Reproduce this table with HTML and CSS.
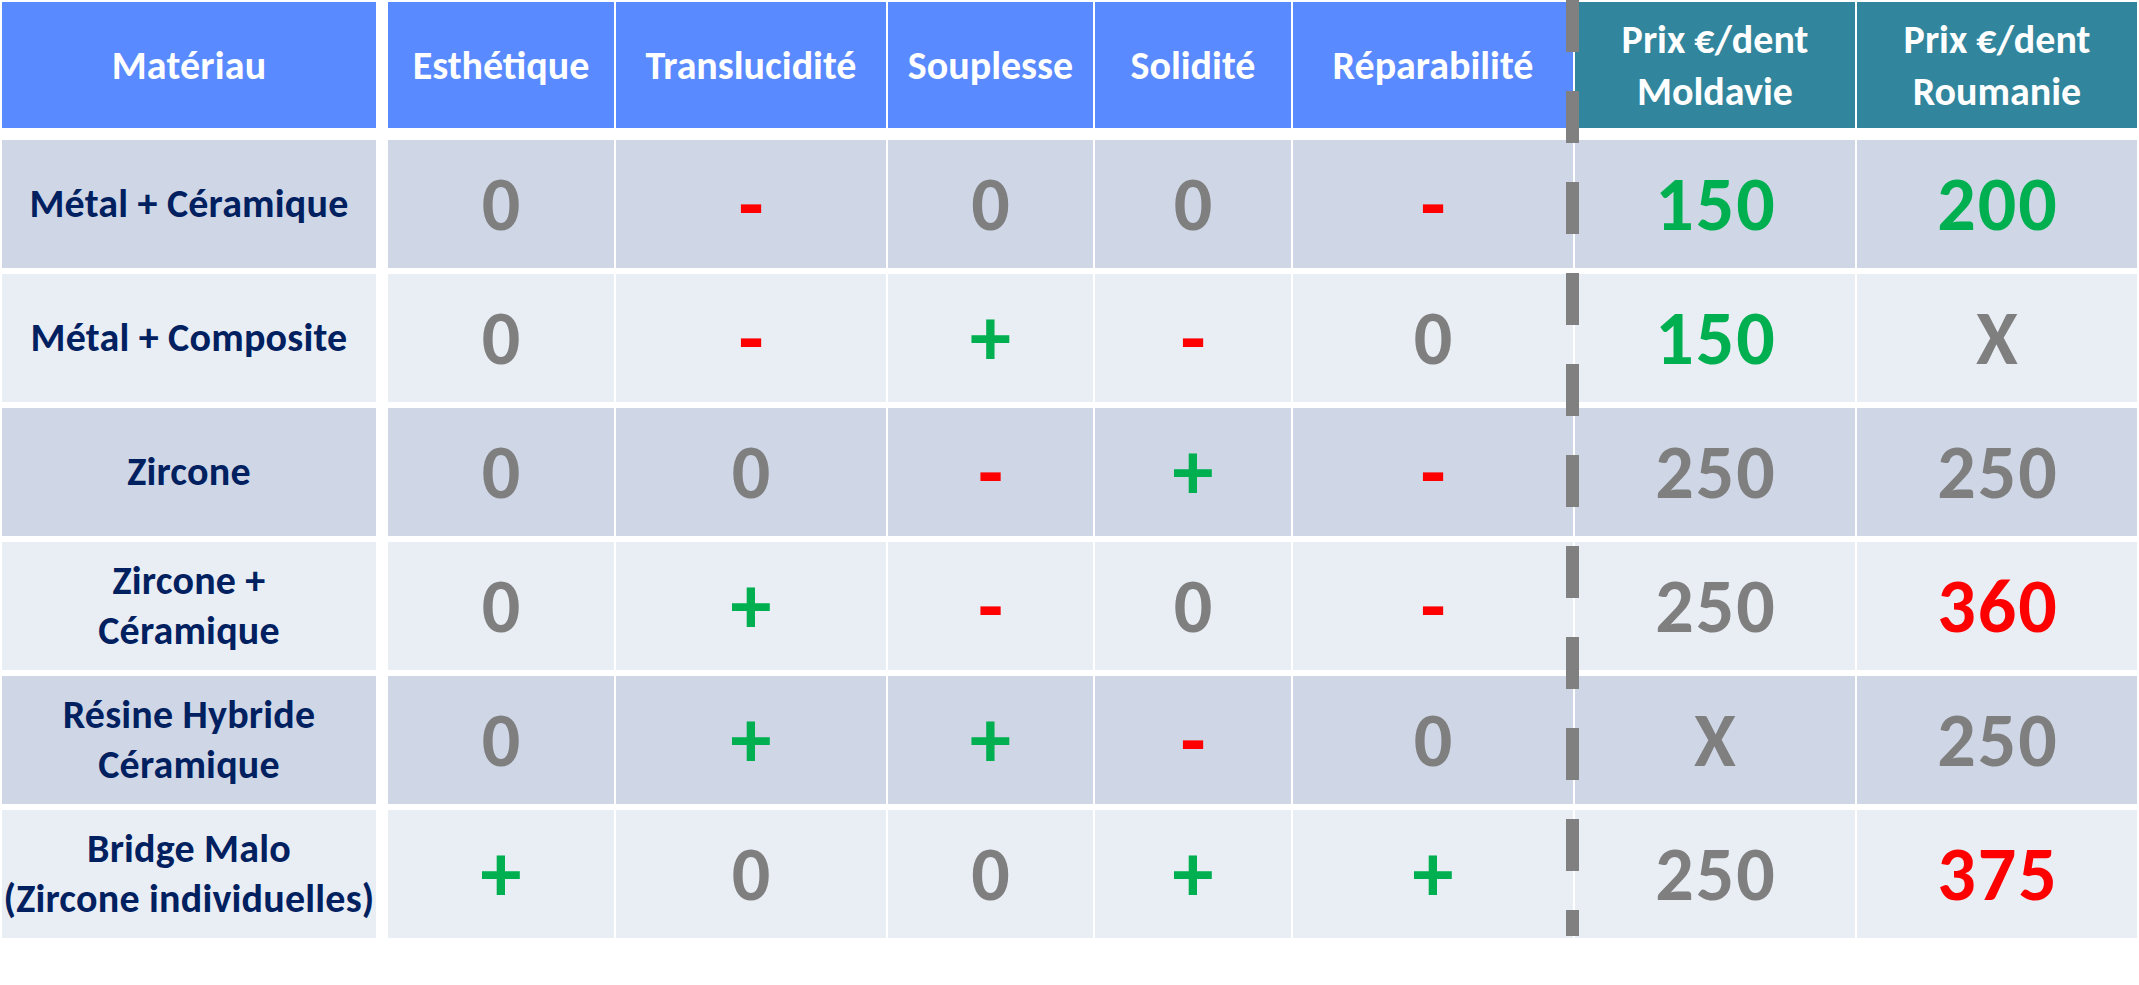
FILE: index.html
```html
<!DOCTYPE html>
<html lang="fr">
<head>
<meta charset="utf-8">
<title>Comparatif matériaux</title>
<link rel="stylesheet" href="styles.css">
</head>
<body>
<div class="table">
  <div class="row head">
    <div class="cell label">Matériau</div>
    <div class="cell">Esthétique</div>
    <div class="cell">Translucidité</div>
    <div class="cell">Souplesse</div>
    <div class="cell">Solidité</div>
    <div class="cell">Réparabilité</div>
    <div class="cell price">Prix €/dent<br>Moldavie</div>
    <div class="cell price">Prix €/dent<br>Roumanie</div>
  </div>
  <div class="row dark">
    <div class="cell label">Métal + Céramique</div>
    <div class="cell v zero">0</div>
    <div class="cell v minus">-</div>
    <div class="cell v zero">0</div>
    <div class="cell v zero">0</div>
    <div class="cell v minus">-</div>
    <div class="cell v good">150</div>
    <div class="cell v good">200</div>
  </div>
  <div class="row light">
    <div class="cell label">Métal + Composite</div>
    <div class="cell v zero">0</div>
    <div class="cell v minus">-</div>
    <div class="cell v plus">+</div>
    <div class="cell v minus">-</div>
    <div class="cell v zero">0</div>
    <div class="cell v good">150</div>
    <div class="cell v zero">X</div>
  </div>
  <div class="row dark">
    <div class="cell label">Zircone</div>
    <div class="cell v zero">0</div>
    <div class="cell v zero">0</div>
    <div class="cell v minus">-</div>
    <div class="cell v plus">+</div>
    <div class="cell v minus">-</div>
    <div class="cell v zero">250</div>
    <div class="cell v zero">250</div>
  </div>
  <div class="row light">
    <div class="cell label">Zircone +<br>Céramique</div>
    <div class="cell v zero">0</div>
    <div class="cell v plus">+</div>
    <div class="cell v minus">-</div>
    <div class="cell v zero">0</div>
    <div class="cell v minus">-</div>
    <div class="cell v zero">250</div>
    <div class="cell v bad">360</div>
  </div>
  <div class="row dark">
    <div class="cell label">Résine Hybride<br>Céramique</div>
    <div class="cell v zero">0</div>
    <div class="cell v plus">+</div>
    <div class="cell v plus">+</div>
    <div class="cell v minus">-</div>
    <div class="cell v zero">0</div>
    <div class="cell v zero">X</div>
    <div class="cell v zero">250</div>
  </div>
  <div class="row light">
    <div class="cell label">Bridge Malo<br>(Zircone individuelles)</div>
    <div class="cell v plus">+</div>
    <div class="cell v zero">0</div>
    <div class="cell v zero">0</div>
    <div class="cell v plus">+</div>
    <div class="cell v plus">+</div>
    <div class="cell v zero">250</div>
    <div class="cell v bad">375</div>
  </div>
  <div class="divider"></div>
</div>
</body>
</html>
```
FILE: styles.css
```css
html, body {
  margin: 0;
  padding: 0;
  background: #ffffff;
}

body {
  font-family: Carlito, Lato, "Open Sans", sans-serif;
  font-weight: 700;
}

.table {
  position: relative;
  padding: 2px;
  display: flex;
  flex-direction: column;
  gap: 6px;
  width: 2135px;
}

.row {
  display: grid;
  grid-template-columns: 384px 226px 270px 205px 196px 280px 280px 280px;
  column-gap: 2px;
  height: 128px;
}

.row.head {
  height: 126px;
  margin-bottom: 6px;
}

.row > .cell:first-child {
  margin-right: 10px;
}

.cell {
  display: flex;
  align-items: center;
  justify-content: center;
  text-align: center;
  white-space: nowrap;
}

.head .cell {
  background: #5a8aff;
  color: #ffffff;
  font-size: 40px;
  line-height: 1.3;
  padding-top: 2px;
}

.head .cell.price {
  background: #31859c;
}

.dark .cell {
  background: #cfd7e6;
}

.light .cell {
  background: #e9edf4;
}

.label {
  color: #002060;
  font-size: 40px;
  line-height: 1.26;
  letter-spacing: 0.2px;
}

.v {
  font-size: 76px;
  font-weight: 900;
  line-height: 1;
  letter-spacing: 2px;
  padding-left: 2px;
}

.plus,
.minus {
  font-size: 82px;
  font-weight: 700;
  letter-spacing: 0;
  padding-left: 0;
}

.zero {
  color: #7f7f7f;
}

.good,
.plus {
  color: #00b050;
}

.bad,
.minus {
  color: #ff0000;
}

.divider {
  position: absolute;
  left: 1566px;
  top: 0;
  width: 13px;
  height: 936px;
  background: repeating-linear-gradient(to bottom, #808080 0, #808080 52px, transparent 52px, transparent 91px);
}
```
